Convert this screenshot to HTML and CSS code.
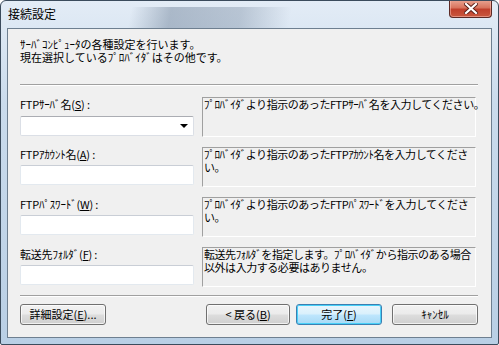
FILE: index.html
```html
<!DOCTYPE html>
<html lang="ja">
<head>
    <meta charset="UTF-8">
    <title>接続設定</title>
    <link rel="stylesheet" href="styles.css">
</head>
<body>
    <div class="window">
        <div class="titlebar">
            <span class="title">接続設定</span>
            <div class="close-btn">
                <svg width="14" height="11" viewBox="0 0 14 11">
                    <path d="M2 1 L12 10 M12 1 L2 10" stroke="#5a2018" stroke-width="4" stroke-linecap="square"/>
                    <path d="M2 1 L12 10 M12 1 L2 10" stroke="#fff" stroke-width="2.2" stroke-linecap="square"/>
                </svg>
            </div>
        </div>
        <div class="client">
            <div class="intro">
                <div class="line">ｻｰﾊﾞｺﾝﾋﾟｭｰﾀの各種設定を行います。</div>
                <div class="line">現在選択しているﾌﾟﾛﾊﾞｲﾀﾞはその他です。</div>
            </div>
            <div class="sep"></div>
            <div class="fields">
                <div class="field">
                    <div class="field-left">
                        <label>FTPｻｰﾊﾞ名(<u>S</u>) :</label>
                        <div class="combo"><span class="arrow"></span></div>
                    </div>
                    <div class="hint">
                        <div class="line">ﾌﾟﾛﾊﾞｲﾀﾞより指示のあったFTPｻｰﾊﾞ名を入力してください。</div>
                    </div>
                </div>
                <div class="field">
                    <div class="field-left">
                        <label>FTPｱｶｳﾝﾄ名(<u>A</u>) :</label>
                        <div class="textbox"></div>
                    </div>
                    <div class="hint">
                        <div class="line">ﾌﾟﾛﾊﾞｲﾀﾞより指示のあったFTPｱｶｳﾝﾄ名を入力してくださ</div>
                        <div class="line">い。</div>
                    </div>
                </div>
                <div class="field">
                    <div class="field-left">
                        <label>FTPﾊﾟｽﾜｰﾄﾞ(<u>W</u>) :</label>
                        <div class="textbox"></div>
                    </div>
                    <div class="hint">
                        <div class="line">ﾌﾟﾛﾊﾞｲﾀﾞより指示のあったFTPﾊﾟｽﾜｰﾄﾞを入力してくださ</div>
                        <div class="line">い。</div>
                    </div>
                </div>
                <div class="field">
                    <div class="field-left">
                        <label>転送先ﾌｫﾙﾀﾞ(<u>F</u>) :</label>
                        <div class="textbox"></div>
                    </div>
                    <div class="hint">
                        <div class="line">転送先ﾌｫﾙﾀﾞを指定します。ﾌﾟﾛﾊﾞｲﾀﾞから指示のある場合</div>
                        <div class="line">以外は入力する必要はありません。</div>
                    </div>
                </div>
            </div>
            <div class="sep sep-bottom"></div>
            <div class="buttons">
                <button class="btn btn-detail">詳細設定(<u>E</u>)...</button>
                <div class="btn-group">
                    <button class="btn">&lt; 戻る(<u>B</u>)</button>
                    <button class="btn btn-default">完了(<u>F</u>)</button>
                    <button class="btn btn-cancel">ｷｬﾝｾﾙ</button>
                </div>
            </div>
        </div>
    </div>
</body>
</html>
```

FILE: styles.css
```css
body {
    margin: 0;
    padding: 0;
    font-family: "Noto Sans CJK JP", "Liberation Sans", sans-serif;
    font-size: 11px;
    color: #000;
    background-color: #fff;
}
.window {
    width: 499px;
    height: 345px;
    box-sizing: border-box;
    border: 1px solid #3b4b5c;
    border-radius: 6px 6px 2px 2px;
    padding: 0 6px 6px 6px;
    display: flex;
    flex-direction: column;
    background:
        linear-gradient(100deg, rgba(255,255,255,0) 0%, rgba(255,255,255,0) 26%, rgba(90,110,135,0.4) 34%, rgba(90,110,135,0.3) 48%, rgba(255,255,255,0) 58%),
        linear-gradient(180deg, #e3ecf6 0%, #cadbec 30%, #b9cfe5 100%);
    background-size: 100% 28px, 100% 100%;
    background-position: 0 6px, 0 0;
    background-repeat: no-repeat;
    overflow: hidden;
}
.titlebar {
    height: 27px;
    display: flex;
    justify-content: space-between;
    align-items: flex-start;
}
.title {
    font-size: 12px;
    line-height: 14px;
    padding: 6px 0 0 1px;
}
.close-btn {
    width: 43px;
    height: 18px;
    box-sizing: border-box;
    margin-top: -1px;
    border: 1px solid #5c2a25;
    border-top: none;
    border-radius: 0 0 4px 4px;
    background: linear-gradient(180deg, #e9a593 0%, #d8745e 45%, #c0402c 55%, #c9583e 100%);
    display: flex;
    align-items: center;
    justify-content: center;
    box-shadow: inset 0 0 0 1px rgba(255, 200, 190, 0.5);
}
.close-btn svg {
    display: block;
}
.client {
    flex-grow: 1;
    background-color: #f0f0f0;
    border: 1px solid #6e7f90;
    padding: 9px 12px 0 12px;
    line-height: 13px;
}
.line {
    height: 13px;
    white-space: nowrap;
}
.sep {
    margin-top: 20px;
    margin-right: 1px;
    border-top: 1px solid #a0a0a0;
    border-bottom: 1px solid #fff;
}
.fields {
    display: flex;
    flex-direction: column;
    gap: 10px;
    margin-top: 11px;
}
.field {
    display: flex;
    gap: 8px;
    height: 40px;
}
.field-left {
    width: 174px;
    display: flex;
    flex-direction: column;
}
.field-left label {
    display: block;
    padding-top: 1px;
    height: 13px;
    letter-spacing: -0.2px;
}
.combo,
.textbox {
    box-sizing: border-box;
    height: 20px;
    background-color: #fff;
    border: 1px solid #dbdfe6;
    border-top-color: #abadb3;
    border-radius: 2px;
}
.combo {
    margin-top: 5px;
    position: relative;
}
.textbox {
    margin-top: 4px;
    border-color: #e3e9ef;
    border-top-color: #c9ced6;
}
.arrow {
    position: absolute;
    right: 5px;
    top: 7px;
    width: 0;
    height: 0;
    border-left: 4px solid transparent;
    border-right: 4px solid transparent;
    border-top: 4px solid #000;
}
.hint {
    width: 274px;
    box-sizing: border-box;
    border: 1px solid #fff;
    border-top-color: #a0a0a0;
    border-left-color: #a0a0a0;
    padding: 0 0 0 1px;
    letter-spacing: -0.45px;
}
.sep-bottom {
    margin-top: 8px;
}
.buttons {
    display: flex;
    justify-content: space-between;
    margin-top: 7px;
    margin-right: 1px;
}
.btn-group {
    display: flex;
    gap: 6px;
}
.btn {
    font-family: inherit;
    font-size: 11px;
    line-height: 13px;
    height: 21px;
    width: 84px;
    padding: 0;
    color: #000;
    border: 1px solid #707070;
    border-radius: 3px;
    background: linear-gradient(180deg, #f2f2f2 0%, #ebebeb 48%, #dddddd 52%, #cfcfcf 100%);
    box-shadow: inset 0 0 0 1px rgba(255, 255, 255, 0.7);
}
.btn-detail {
    width: 86px;
}
.btn-default {
    width: 86px;
    border-color: #3c7fb1;
    background: linear-gradient(180deg, #eaf6fd 0%, #d9f0fc 48%, #bee6fd 52%, #a7d9f5 100%);
    box-shadow: inset 0 0 0 1px #48d0f8;
}
.btn-cancel {
    width: 86px;
    margin-left: 4px;
}
```
